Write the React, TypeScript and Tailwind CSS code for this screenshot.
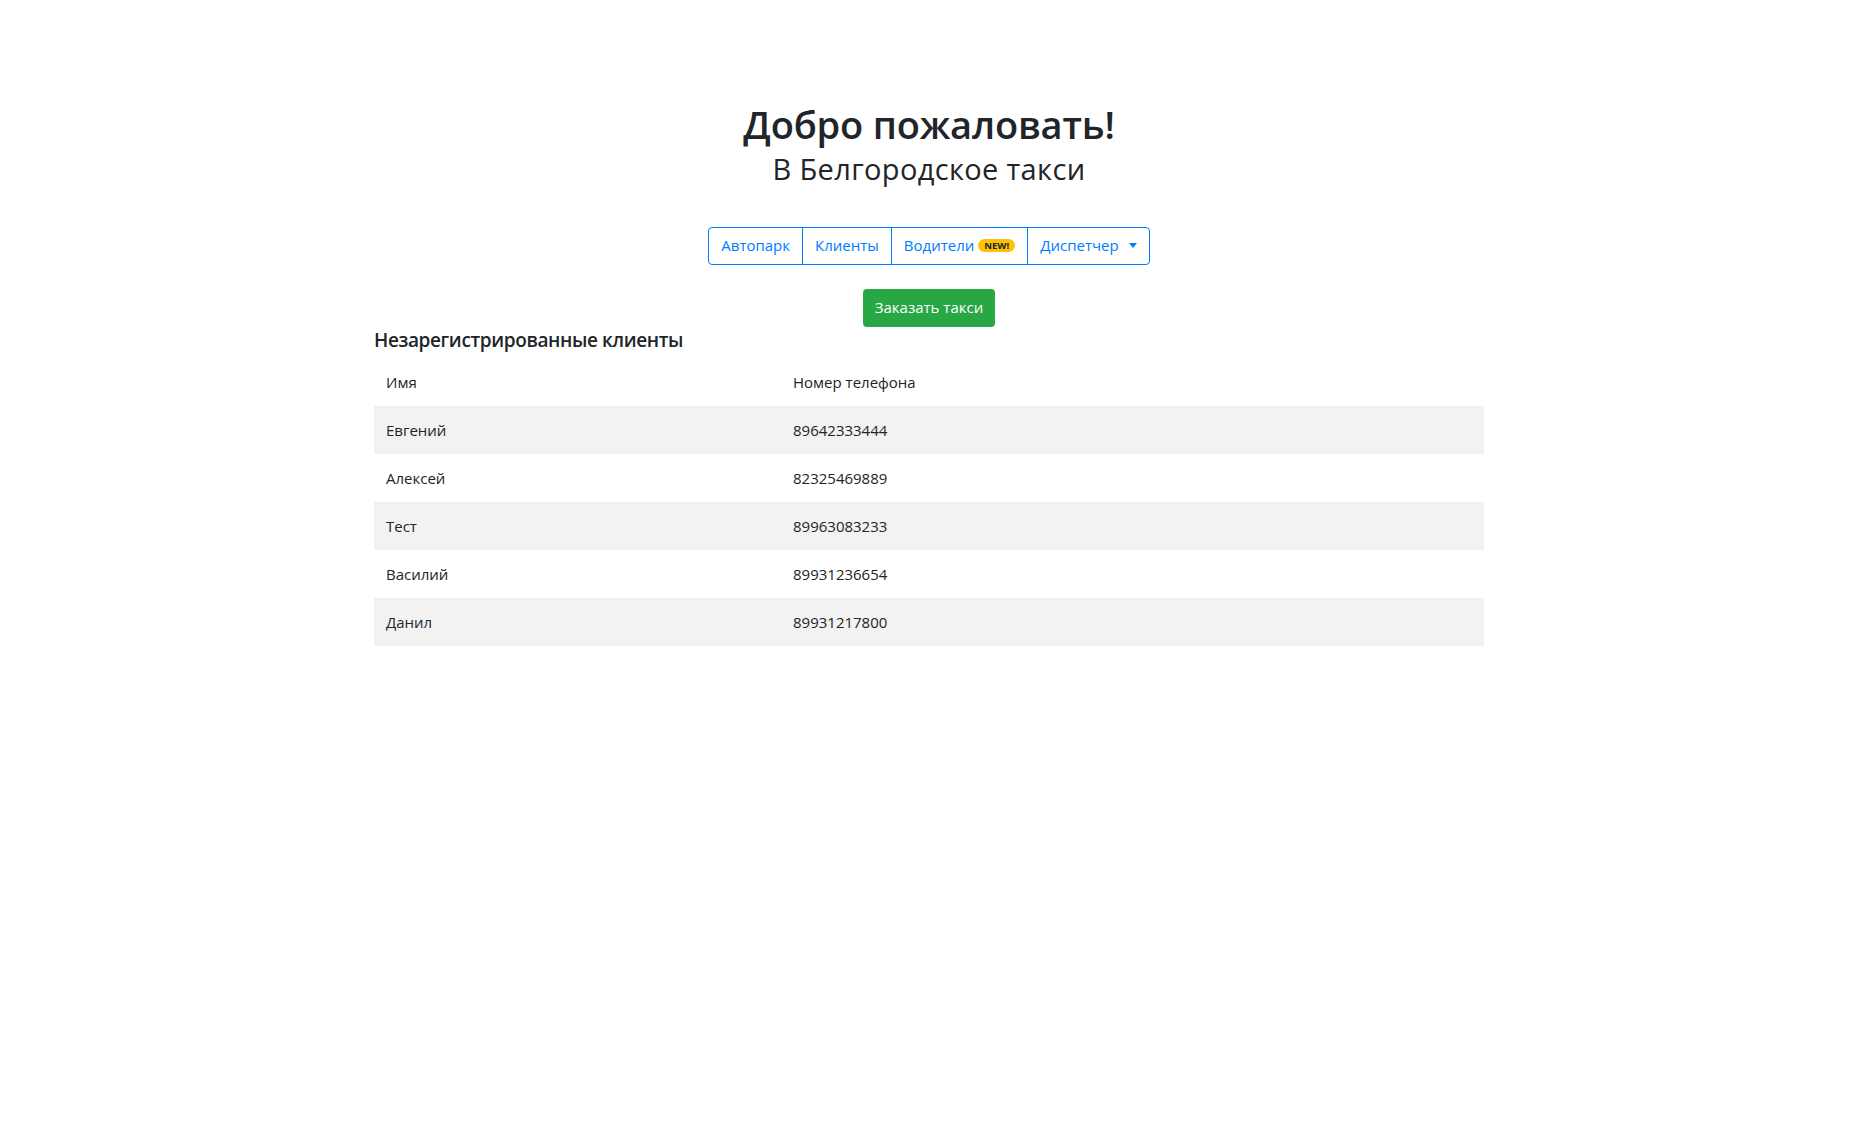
const clients = [
    { name: "Евгений", phone: "89642333444" },
    { name: "Алексей", phone: "82325469889" },
    { name: "Тест", phone: "89963083233" },
    { name: "Василий", phone: "89931236654" },
    { name: "Данил", phone: "89931217800" },
];

const NavGroup = () => {
    return (
        <div className="inline-flex items-stretch">
            <button className="h-[38px] px-[12px] text-[15px] text-[#007bff] border border-[#007bff] rounded-l-[4px]">
                Автопарк
            </button>
            <button className="h-[38px] px-[12px] text-[15px] text-[#007bff] border border-[#007bff] -ml-px">
                Клиенты
            </button>
            <button className="h-[38px] px-[12px] text-[15px] text-[#007bff] border border-[#007bff] -ml-px flex items-center">
                Водители
                <span className="ml-[4px] px-[6px] py-[1px] rounded-full bg-[#ffc107] text-[#212529] text-[9.5px] font-bold leading-[11px]">
                    NEW!
                </span>
            </button>
            <button className="h-[38px] px-[12px] text-[15px] text-[#007bff] border border-[#007bff] -ml-px rounded-r-[4px] flex items-center">
                Диспетчер
                <span className="ml-[10px] w-0 h-0 border-t-[5px] border-t-[#007bff] border-x-[4px] border-x-transparent" />
            </button>
        </div>
    );
};

export default function App() {
    return (
        <div className="min-h-screen bg-white text-[#212529] font-['Open_Sans',sans-serif]">
            <div className="mx-auto max-w-[1140px] px-[15px] pt-[100px]">
                <div className="text-center">
                    <h1 className="text-[38px] leading-[48px] tracking-[-0.005em] font-semibold">Добро пожаловать!</h1>
                    <h3 className="text-[29px] leading-[33.6px] tracking-[0.012em] mt-[4px]">В Белгородское такси</h3>
                </div>

                <div className="flex justify-center mt-[41px]">
                    <NavGroup />
                </div>

                <div className="flex justify-center mt-[24px]">
                    <button className="h-[38px] px-[12px] text-[15px] text-white bg-[#28a745] rounded-[4px]">
                        Заказать такси
                    </button>
                </div>

                <h5 className="text-[19px] leading-[24px] tracking-[-0.02em] font-semibold mt-[1px] mb-[6px]">Незарегистрированные клиенты</h5>

                <table className="w-full text-[15px] leading-[24px]">
                    <thead>
                        <tr>
                            <td className="p-[12px] w-[407px]">Имя</td>
                            <td className="p-[12px]">Номер телефона</td>
                        </tr>
                    </thead>
                    <tbody>
                        {clients.map((c, i) => (
                            <tr key={c.phone} className={i % 2 === 0 ? "bg-[#f2f2f2]" : ""}>
                                <td className="p-[12px]">{c.name}</td>
                                <td className="p-[12px]">{c.phone}</td>
                            </tr>
                        ))}
                    </tbody>
                </table>
            </div>
        </div>
    );
}
